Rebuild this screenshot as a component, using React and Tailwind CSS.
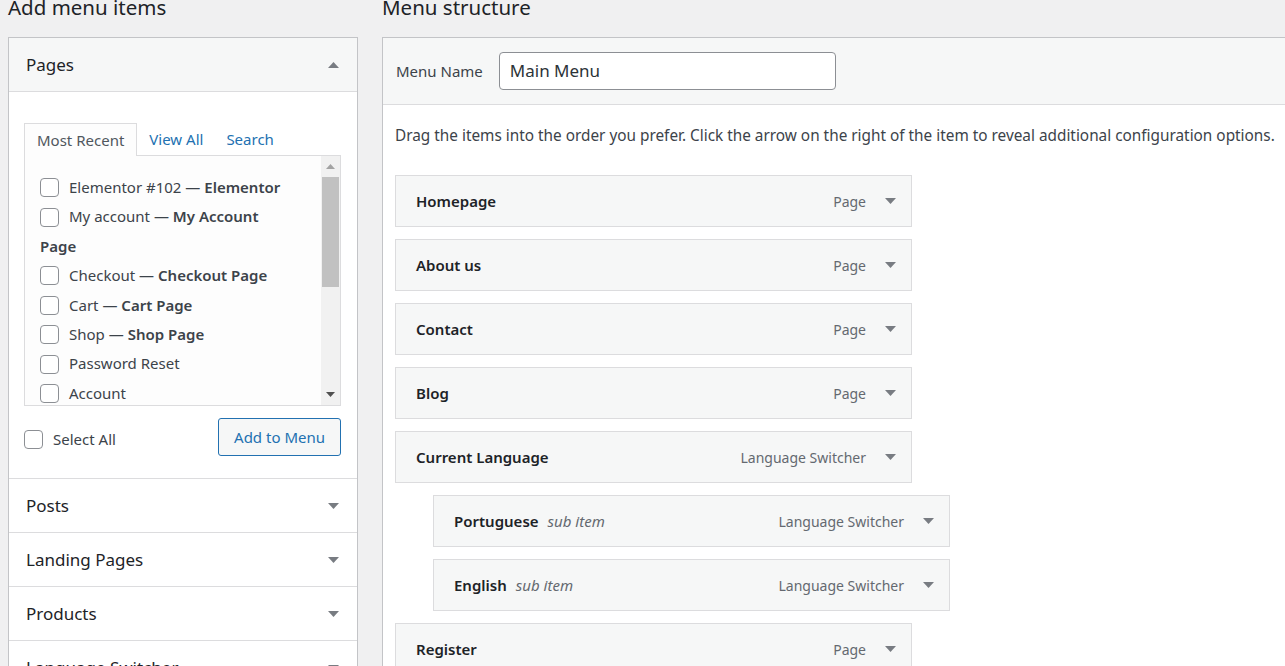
import React from "react";

const FONT = { fontFamily: '"Noto Sans", "Open Sans", sans-serif' };

const recent = [
  { name: "Elementor #102", tag: "Elementor" },
  { name: "My account", tag: "My Account", wrap: "Page" },
  { name: "Checkout", tag: "Checkout Page" },
  { name: "Cart", tag: "Cart Page" },
  { name: "Shop", tag: "Shop Page" },
  { name: "Password Reset" },
  { name: "Account" },
];

const menuItems = [
  { title: "Homepage", type: "Page" },
  { title: "About us", type: "Page" },
  { title: "Contact", type: "Page" },
  { title: "Blog", type: "Page" },
  { title: "Current Language", type: "Language Switcher" },
  { title: "Portuguese", type: "Language Switcher", sub: true },
  { title: "English", type: "Language Switcher", sub: true },
  { title: "Register", type: "Page" },
];

function Arrow({ up }) {
  return (
    <svg width="11" height="6" viewBox="0 0 11 6" className="shrink-0">
      {up ? <path d="M0 6 L5.5 0 L11 6 Z" fill="#787c82" /> : <path d="M0 0 L11 0 L5.5 6 Z" fill="#787c82" />}
    </svg>
  );
}

function Checkbox() {
  return <span className="inline-block w-[19px] h-[19px] rounded-[4px] border border-[#8c8f94] bg-white shrink-0" />;
}

function Section({ title }) {
  return (
    <div className="h-[54px] border-t border-[#dcdcde] bg-white flex items-center justify-between pl-[17px] pr-[18px]">
      <span className="text-[17px] text-[#1d2327]">{title}</span>
      <Arrow />
    </div>
  );
}

function MenuItem({ item }) {
  return (
    <div className={`${item.sub ? "ml-[38px]" : ""} w-[517px] h-[52px] bg-[#f6f7f7] border border-[#dcdcde] flex items-center pl-[20px] pr-[15px]`}>
      <span className="text-[15px] font-semibold text-[#1d2327]">{item.title}</span>
      {item.sub && <span className="ml-[9px] text-[15px] italic text-[#646970]">sub item</span>}
      <span className="ml-auto text-[14px] text-[#646970]">{item.type}</span>
      <span className="ml-[19px]"><Arrow /></span>
    </div>
  );
}

export default function App() {
  return (
    <div className="w-[1285px] h-[666px] overflow-hidden bg-[#f0f0f1] text-[#3c434a]" style={FONT}>
      <div className="flex pl-[8px] -mt-[8px]">
        {/* left column */}
        <div className="w-[350px] shrink-0">
          <h2 className="text-[20.5px] leading-[30px] font-normal text-[#1d2327] h-[45px]">Add menu items</h2>
          <div className="border border-[#c3c4c7] bg-white">
            <div className="h-[54px] bg-[#f6f7f7] border-b border-[#dcdcde] flex items-center justify-between pl-[17px] pr-[18px]">
              <span className="text-[17px] text-[#1d2327]">Pages</span>
              <Arrow up />
            </div>
            <div className="pt-[30px] pl-[15px] pr-[16px] pb-[22px]">
              <div className="flex items-end text-[15px]">
                <div className="h-[33px] px-[12px] border border-b-0 border-[#dcdcde] bg-[#fdfdfd] flex items-center text-[#50575e] relative top-px">Most Recent</div>
                <div className="h-[32px] px-[12px] flex items-center text-[#2271b1]">View All</div>
                <div className="h-[32px] px-[11px] flex items-center text-[#2271b1]">Search</div>
              </div>
              <div className="h-[251px] border border-[#dcdcde] bg-[#fdfdfd] flex overflow-hidden">
                <ul className="flex-1 pt-[17px] pl-[15px] text-[15px]">
                  {recent.map((r) => (
                    <li key={r.name} className="leading-[29.4px]">
                      <div className="flex items-center gap-[10px] h-[29.4px]">
                        <Checkbox />
                        <span>
                          {r.name}
                          {r.tag && <> — <b className="font-semibold text-[#3c434a]">{r.tag}</b></>}
                        </span>
                      </div>
                      {r.wrap && <div className="font-semibold">{r.wrap}</div>}
                    </li>
                  ))}
                </ul>
                <div className="w-[19px] bg-[#f1f1f1] flex flex-col items-center">
                  <div className="h-[21px] flex items-center justify-center">
                    <svg width="9" height="5" viewBox="0 0 9 5"><path d="M0 5 L4.5 0 L9 5 Z" fill="#a3a3a3" /></svg>
                  </div>
                  <div className="w-[17px] h-[110px] bg-[#c1c1c1]" />
                  <div className="flex-1" />
                  <div className="h-[21px] flex items-center justify-center">
                    <svg width="9" height="5" viewBox="0 0 9 5"><path d="M0 0 L9 0 L4.5 5 Z" fill="#505050" /></svg>
                  </div>
                </div>
              </div>
              <div className="flex items-center justify-between mt-[14px]">
                <label className="flex items-center gap-[10px] text-[15px] mt-[3px]">
                  <Checkbox />
                  Select All
                </label>
                <button className="h-[38px] px-[15px] rounded-[3px] border border-[#2271b1] bg-[#f6f7f7] text-[#2271b1] text-[15px] -mt-[2px]">Add to Menu</button>
              </div>
            </div>
            <Section title="Posts" />
            <Section title="Landing Pages" />
            <Section title="Products" />
            <Section title="Language Switcher" />
          </div>
        </div>

        {/* right column */}
        <div className="ml-[24px] flex-1 min-w-0">
          <h2 className="text-[20.5px] leading-[30px] font-normal text-[#1d2327] h-[45px]">Menu structure</h2>
          <div className="border border-[#c3c4c7] border-r-0 bg-white w-[920px]">
            <div className="h-[67px] bg-[#f6f7f7] border-b border-[#dcdcde] flex items-center pl-[13px]">
              <span className="text-[15px] text-[#3c434a]">Menu Name</span>
              <div className="ml-[16px] w-[337px] h-[38px] rounded-[4px] border border-[#8c8f94] bg-white flex items-center px-[10px] text-[17px] text-[#2c3338]">Main Menu</div>
            </div>
            <div className="pl-[12px] pt-[19px]">
              <p className="text-[15.35px] whitespace-nowrap text-[#3c434a]">Drag the items into the order you prefer. Click the arrow on the right of the item to reveal additional configuration options.</p>
              <div className="mt-[28px] flex flex-col gap-[12px]">
                {menuItems.map((m) => <MenuItem key={m.title} item={m} />)}
              </div>
            </div>
          </div>
        </div>
      </div>
    </div>
  );
}
